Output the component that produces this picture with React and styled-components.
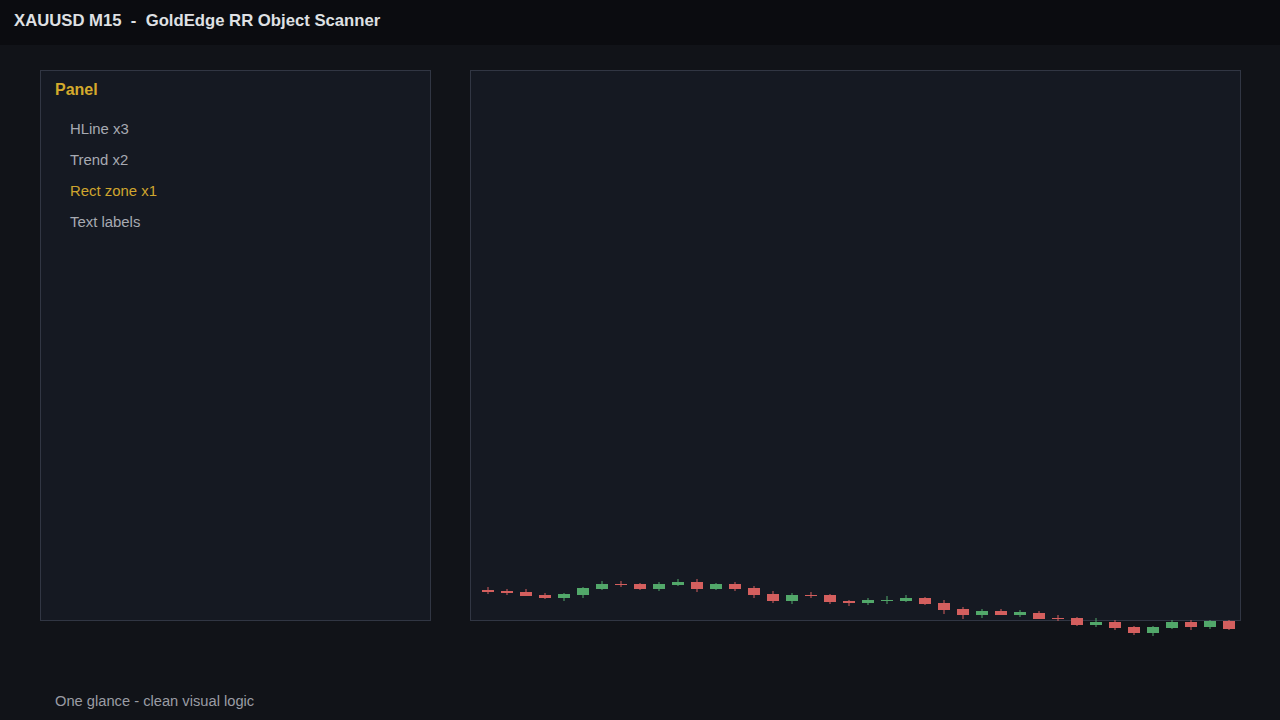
import React from "react";
import styled, { createGlobalStyle } from "styled-components";

const GlobalStyle = createGlobalStyle`
  html, body {
    margin: 0;
    padding: 0;
    background: #111318;
    font-family: "Liberation Sans", Arial, sans-serif;
  }
  #root {
    min-height: 720px;
  }
`;

const Page = styled.div`
  width: 1280px;
  height: 720px;
  background: #111318;
  display: flex;
  flex-direction: column;
  overflow: hidden;
`;

const TopBar = styled.header`
  height: 45px;
  flex: none;
  background: #0b0c10;
  display: flex;
  align-items: center;
  padding: 0 0 4px 14px;
  box-sizing: border-box;
`;

const Title = styled.h1`
  margin: 0;
  font-size: 16.7px;
  font-weight: 700;
  color: #dfe0e3;
  white-space: pre;
`;

const Workspace = styled.main`
  display: flex;
  gap: 39px;
  padding: 25px 0 0 40px;
`;

const Card = styled.section`
  box-sizing: border-box;
  width: ${(p) => p.$width}px;
  height: 551px;
  background: #151922;
  border: 1px solid #313643;
  position: relative;
`;

const SidePanel = styled(Card)`
  padding: 10px 0 0 14px;
`;

const PanelTitle = styled.h2`
  margin: 0;
  font-size: 16px;
  font-weight: 700;
  color: #d4aa2c;
  line-height: 18px;
`;

const ItemList = styled.ul`
  list-style: none;
  margin: 21px 0 0 0;
  padding: 0 0 0 15px;
  display: flex;
  flex-direction: column;
  gap: 13px;
`;

const Item = styled.li`
  font-size: 14.9px;
  line-height: 18px;
  color: ${(p) => (p.$active ? "#cfa52e" : "#a7aab2")};
`;

const ChartSvg = styled.svg`
  position: absolute;
  inset: -1px;
  width: calc(100% + 2px);
  height: calc(100% + 2px);
  overflow: visible;
`;

const Footer = styled.footer`
  margin-top: auto;
  padding: 0 0 10px 55px;
  font-size: 14.7px;
  line-height: 18px;
  color: #9a9ca4;
`;

// [bodyTop, bodyBottom, wickTop, wickBottom, bullish] in page pixels
const candles = [
  [590, 592, 587, 594, 0],
  [591, 593, 589, 595, 0],
  [592, 596, 589, 596, 0],
  [595, 598, 593, 599, 0],
  [594, 598, 593, 601, 1],
  [588, 595, 587, 598, 1],
  [584, 589, 581, 590, 1],
  [584, 585, 581, 587, 0],
  [584, 589, 583, 590, 0],
  [584, 589, 582, 591, 1],
  [582, 585, 579, 586, 1],
  [582, 589, 579, 592, 0],
  [584, 589, 583, 590, 1],
  [584, 589, 582, 591, 0],
  [588, 595, 586, 598, 0],
  [594, 601, 591, 603, 0],
  [595, 601, 593, 604, 1],
  [595, 596, 592, 598, 0],
  [595, 602, 594, 604, 0],
  [601, 603, 600, 606, 0],
  [600, 603, 598, 605, 1],
  [600, 601, 596, 604, 1],
  [598, 601, 595, 602, 1],
  [598, 604, 597, 605, 0],
  [603, 610, 600, 614, 0],
  [609, 615, 607, 619, 0],
  [611, 615, 609, 618, 1],
  [611, 615, 609, 615, 0],
  [612, 615, 610, 617, 1],
  [613, 619, 611, 619, 0],
  [618, 619, 615, 621, 0],
  [618, 625, 617, 626, 0],
  [622, 625, 618, 627, 1],
  [622, 628, 620, 630, 0],
  [627, 633, 626, 635, 0],
  [627, 633, 626, 636, 1],
  [622, 628, 620, 629, 1],
  [622, 627, 620, 630, 0],
  [621, 627, 620, 629, 1],
  [621, 629, 620, 630, 0],
];

const ORIGIN_X = 470;
const ORIGIN_Y = 70;
const UP = "#52a86a";
const DOWN = "#d45f5e";

function CandleChart() {
  return (
    <ChartSvg viewBox="0 0 771 551" preserveAspectRatio="none">
      {candles.map(([bt, bb, wt, wb, up], i) => {
        const cx = 488 + i * 19 - ORIGIN_X;
        const color = up ? UP : DOWN;
        const h = Math.max(bb - bt, 1);
        return (
          <g key={i}>
            <rect
              x={cx - 0.5}
              y={wt - ORIGIN_Y}
              width={1}
              height={wb - wt}
              fill={color}
            />
            <rect
              x={cx - 6}
              y={bt - ORIGIN_Y}
              width={12}
              height={h}
              fill={color}
            />
          </g>
        );
      })}
    </ChartSvg>
  );
}

export default function App() {
  const items = [
    { label: "HLine x3" },
    { label: "Trend x2" },
    { label: "Rect zone x1", active: true },
    { label: "Text labels" },
  ];
  return (
    <Page>
      <GlobalStyle />
      <TopBar>
        <Title>{"XAUUSD M15  -  GoldEdge RR Object Scanner"}</Title>
      </TopBar>
      <Workspace>
        <SidePanel $width={391}>
          <PanelTitle>Panel</PanelTitle>
          <ItemList>
            {items.map((it) => (
              <Item key={it.label} $active={it.active}>
                {it.label}
              </Item>
            ))}
          </ItemList>
        </SidePanel>
        <Card $width={771}>
          <CandleChart />
        </Card>
      </Workspace>
      <Footer>One glance - clean visual logic</Footer>
    </Page>
  );
}
